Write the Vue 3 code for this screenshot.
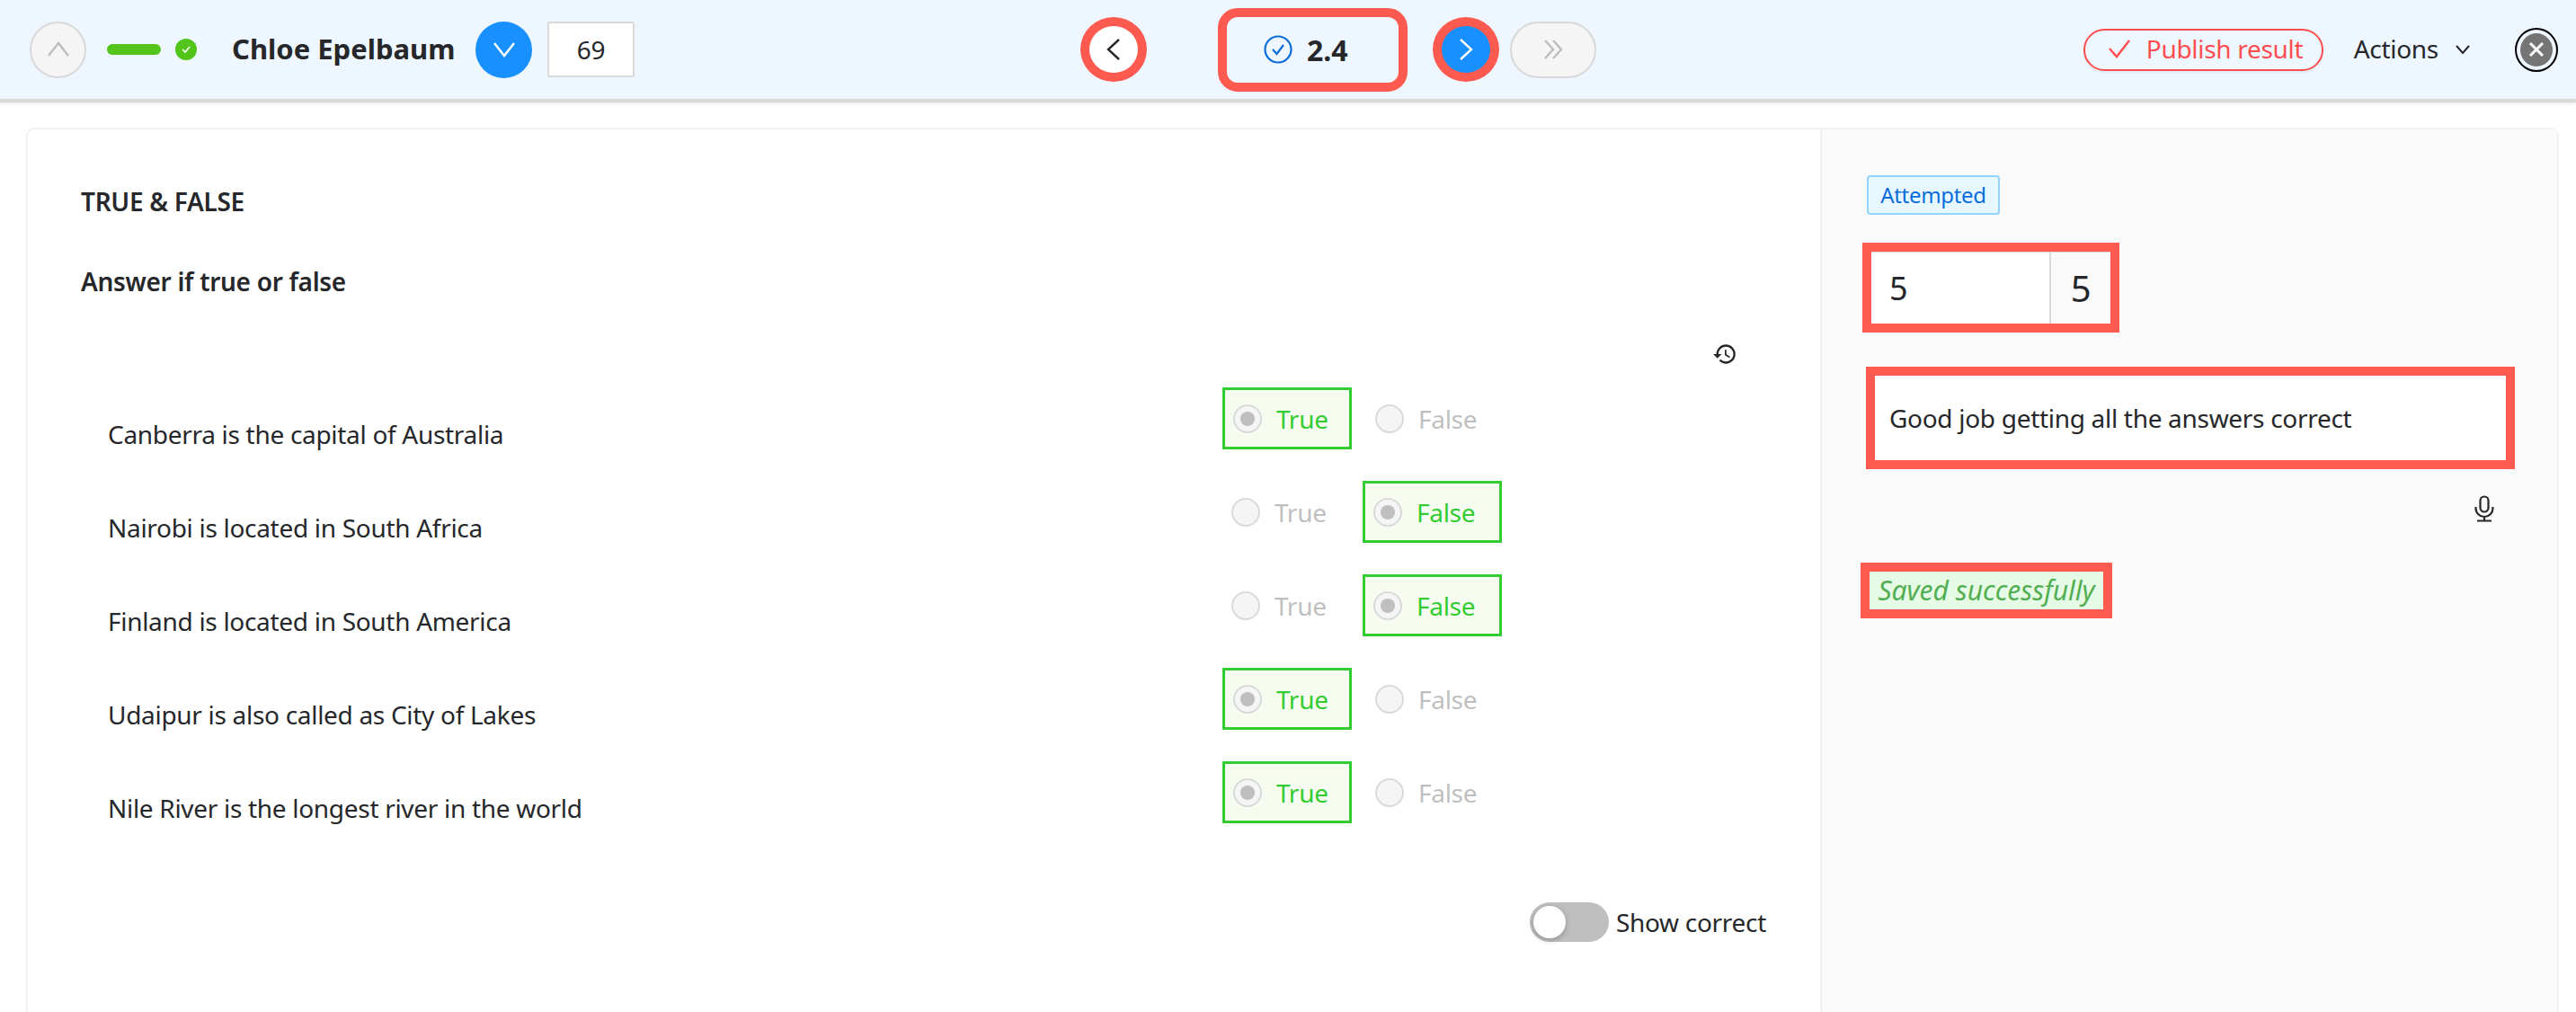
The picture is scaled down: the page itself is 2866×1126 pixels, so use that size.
<template>
  <div class="page">
    <header class="topbar">
      <div class="left">
        <button class="round disabled">
          <svg width="26" height="18" viewBox="0 0 26 18"><path d="M2 16 L13 2 L24 16" /></svg>
        </button>
        <span class="progress"></span>
        <span class="done">
          <svg width="12" height="10" viewBox="0 0 12 10"><path d="M2 5 L5 8 L10 2" /></svg>
        </span>
        <span class="name">Chloe Epelbaum</span>
        <button class="round blue">
          <svg width="26" height="18" viewBox="0 0 26 18"><path d="M2 2 L13 16 L24 2" /></svg>
        </button>
        <div class="count">69</div>
      </div>

      <div class="center">
        <button class="round marked white">
          <svg width="16" height="26" viewBox="0 0 16 26"><path d="M14 2 L2 13 L14 24" /></svg>
        </button>
        <div class="question marked">
          <svg class="q-check" width="32" height="32" viewBox="0 0 32 32">
            <circle cx="16" cy="16" r="14.5" />
            <path d="M10 16 L14.5 21 L22 11" />
          </svg>
          <span>2.4</span>
        </div>
        <button class="round marked blue next">
          <svg width="16" height="26" viewBox="0 0 16 26"><path d="M2 2 L14 13 L2 24" /></svg>
        </button>
        <button class="round disabled last">
          <svg width="22" height="24" viewBox="0 0 22 24"><path d="M2 2 L11 12 L2 22 M11 2 L20 12 L11 22" /></svg>
        </button>
      </div>

      <div class="right">
        <button class="publish">
          <svg width="26" height="22" viewBox="0 0 26 22"><path d="M2 11 L10 20 L24 2" /></svg>
          Publish result
        </button>
        <span class="actions">Actions</span>
        <svg class="caret" width="16" height="10" viewBox="0 0 16 10"><path d="M1 1 L8 9 L15 1" /></svg>
        <div class="close">
          <span class="close-inner">
            <svg width="18" height="18" viewBox="0 0 18 18"><path d="M2 2 L16 16 M16 2 L2 16" /></svg>
          </span>
        </div>
      </div>
    </header>

    <main class="content">
      <section class="card">
        <div class="question-col">
          <h3 class="kind">TRUE &amp; FALSE</h3>
          <p class="prompt">Answer if true or false</p>
          <div class="history">
            <svg width="26" height="24" viewBox="1 2.5 22 19">
              <path d="M13 3a9 9 0 0 0-9 9H1l3.89 3.89.07.14L9 12H6c0-3.87 3.13-7 7-7s7 3.13 7 7-3.13 7-7 7c-1.93 0-3.68-.79-4.94-2.06l-1.42 1.42A8.954 8.954 0 0 0 13 21a9 9 0 0 0 0-18zm-1 5v5l4.28 2.54.72-1.21-3.5-2.08V8H12z" />
            </svg>
          </div>

          <div v-for="row in rows" :key="row.text" class="row">
            <span class="statement">{{ row.text }}</span>
            <div class="options" :class="{ 'false-row': !row.answer }">
              <label class="opt true-opt" :class="{ picked: row.answer }">
                <span class="radio"></span>
                <span>True</span>
              </label>
              <label class="opt false-opt" :class="{ picked: !row.answer }">
                <span class="radio"></span>
                <span>False</span>
              </label>
            </div>
          </div>

          <div class="toggle-line">
            <span class="toggle"><span class="knob"></span></span>
            <span>Show correct</span>
          </div>
        </div>

        <aside class="panel">
          <span class="tag">Attempted</span>
          <div class="score">
            <div class="score-value">5</div>
            <div class="score-max">5</div>
          </div>
          <div class="comment">Good job getting all the answers correct</div>
          <div class="mic">
            <svg width="28" height="30" viewBox="0 0 28 30">
              <rect x="9.5" y="1.5" width="9" height="17" rx="4.5" />
              <path d="M4.5 13 V14.5 A9.5 9.5 0 0 0 23.5 14.5 V13 M14 24 V28 M6 28.5 H22" />
            </svg>
          </div>
          <div class="saved">Saved successfully</div>
        </aside>
      </section>
    </main>
  </div>
</template>

<script setup>
const rows = [
  { text: 'Canberra is the capital of Australia', answer: true },
  { text: 'Nairobi is located in South Africa', answer: false },
  { text: 'Finland is located in South America', answer: false },
  { text: 'Udaipur is also called as City of Lakes', answer: true },
  { text: 'Nile River is the longest river in the world', answer: true }
];
</script>

<style>
html, body {
  margin: 0;
  background: #fff;
}
</style>

<style scoped>
.page {
  height: 100vh;
  overflow: hidden;
  display: flex;
  flex-direction: column;
  font-family: "Noto Sans", "Liberation Sans", sans-serif;
  font-size: 28px;
  letter-spacing: -0.3px;
  color: #25272a;
  box-sizing: border-box;
}

/* top bar */
.topbar {
  flex: none;
  height: 110px;
  box-sizing: content-box;
  background: #eef7ff;
  border-bottom: 4px solid #d9d9d9;
  box-shadow: 0 2px 2px #eeeeee;
  display: flex;
  align-items: center;
  padding-left: 33px;
  padding-right: 20px;
}
.left {
  width: 1169px;
  display: flex;
  align-items: center;
}
.center {
  display: flex;
  align-items: center;
}
.right {
  margin-left: auto;
  display: flex;
  align-items: center;
}

button {
  font-family: inherit;
  letter-spacing: inherit;
  padding: 0;
  cursor: pointer;
}
.round {
  width: 63px;
  height: 63px;
  border-radius: 50%;
  display: flex;
  align-items: center;
  justify-content: center;
  box-sizing: border-box;
  border: 2px solid transparent;
  flex: none;
}
.round svg path {
  fill: none;
  stroke-width: 2.4;
}
.disabled {
  background: #f5f5f5;
  border-color: #d9d9d9;
}
.disabled svg path {
  stroke: #bdbdbd;
}
.blue {
  background: #1890ff;
}
.blue svg path {
  stroke: #fff;
}
.white {
  background: #fff;
}
.white svg path {
  stroke: #25272a;
}
.marked {
  border: 10px solid #fe5a4f;
}
.round.marked {
  width: 74px;
  height: 72px;
}
.progress {
  width: 60px;
  height: 12px;
  border-radius: 6px;
  background: #52c41a;
  margin-left: 23px;
}
.done {
  width: 24px;
  height: 24px;
  border-radius: 50%;
  background: #52c41a;
  margin-left: 16px;
  display: flex;
  align-items: center;
  justify-content: center;
}
.done path {
  fill: none;
  stroke: #fff;
  stroke-width: 1.6;
}
.name {
  font-size: 31px;
  font-weight: 700;
  letter-spacing: 0;
  margin-left: 39px;
  width: 271px;
  padding-bottom: 3px;
  white-space: nowrap;
}
.count {
  width: 97px;
  height: 62px;
  margin-left: 17px;
  box-sizing: border-box;
  background: #fff;
  border: 2px solid #d9d9d9;
  border-radius: 3px;
  display: flex;
  align-items: center;
  justify-content: center;
}
.question {
  width: 211px;
  height: 93px;
  box-sizing: border-box;
  margin-left: 79px;
  border-radius: 22px;
  display: flex;
  align-items: center;
  font-size: 32px;
  font-weight: 700;
  letter-spacing: 0;
  padding-left: 41px;
}
.q-check {
  margin-right: 16px;
}
.q-check circle,
.q-check path {
  fill: none;
  stroke: #096dd9;
  stroke-width: 2.2;
}
.next {
  margin-left: 28px;
}
.last {
  width: 96px;
  margin-left: 12px;
  border-radius: 32px;
}
.publish {
  width: 267px;
  height: 47px;
  box-sizing: border-box;
  background: #eef7ff;
  border: 2px solid #ff4d4f;
  border-radius: 24px;
  color: #ff4d4f;
  font-size: 28px;
  display: flex;
  align-items: center;
  padding: 0 0 3px 25px;
  gap: 17px;
  white-space: nowrap;
  box-shadow: 0 3px 0 #e4eef7;
}
.publish path {
  fill: none;
  stroke: #ff4d4f;
  stroke-width: 2.4;
}
.actions {
  margin-left: 34px;
  padding-bottom: 3px;
}
.caret {
  margin-left: 19px;
}
.caret path {
  fill: none;
  stroke: #25272a;
  stroke-width: 2;
}
.close {
  width: 48px;
  height: 49px;
  box-sizing: border-box;
  margin-left: 50px;
  border: 2px solid #000;
  border-radius: 50%;
  padding: 4px;
}
.close-inner {
  width: 100%;
  height: 100%;
  border-radius: 50%;
  background: #757575;
  display: flex;
  align-items: center;
  justify-content: center;
}
.close-inner path {
  fill: none;
  stroke: #fff;
  stroke-width: 3;
}

/* main card */
.content {
  flex: 1;
  padding: 28px 19px 0 29px;
  min-height: 0;
}
.card {
  height: 1200px;
  box-sizing: border-box;
  border: 2px solid #f0f0f0;
  border-radius: 10px;
  display: flex;
}
.question-col {
  width: 1994px;
  flex: none;
  box-sizing: border-box;
  padding: 60px 60px 0 59px;
}
.kind {
  margin: 0;
  font-size: 28px;
  line-height: 40px;
  font-weight: 600;
}
.prompt {
  margin: 49px 0 0;
  font-size: 28px;
  line-height: 40px;
  font-weight: 600;
}
.history {
  height: 26px;
  margin-top: 49px;
  padding-right: 33px;
  display: flex;
  justify-content: flex-end;
}
.history path {
  fill: #25272a;
}
.row {
  margin-top: 0;
  height: 104px;
  display: flex;
}
.history + .row {
  margin-top: 23px;
}
.statement {
  width: 1270px;
  flex: none;
  padding-left: 30px;
  box-sizing: border-box;
  line-height: 40px;
  padding-top: 32px;
}
.options {
  display: flex;
  gap: 14px;
  align-self: flex-start;
  color: #bfbfbf;
}
.false-row {
  margin-left: -2px;
}
.opt {
  height: 69px;
  box-sizing: border-box;
  border: 3px solid transparent;
  padding-left: 9px;
  display: flex;
  align-items: center;
  gap: 16px;
  flex: none;
}
.true-opt {
  width: 144px;
}
.false-opt {
  width: 155px;
}
.opt.picked {
  border-color: #33cc33;
  background: #f6fcf0;
  color: #33cc33;
}
.radio {
  width: 32px;
  height: 32px;
  box-sizing: border-box;
  border: 2px solid #d9d9d9;
  border-radius: 50%;
  background: #f5f5f5;
  flex: none;
  display: flex;
  align-items: center;
  justify-content: center;
}
.picked .radio::after {
  content: "";
  width: 16px;
  height: 16px;
  border-radius: 50%;
  background: #bfbfbf;
}
.toggle-line {
  margin-top: 53px;
  display: flex;
  justify-content: flex-end;
  align-items: center;
  gap: 8px;
}
.toggle {
  width: 88px;
  height: 44px;
  border-radius: 22px;
  background: #bfbfbf;
  padding: 4px;
  box-sizing: border-box;
  flex: none;
}
.knob {
  display: block;
  width: 36px;
  height: 36px;
  border-radius: 50%;
  background: #fff;
  box-shadow: 0 2px 6px rgba(0, 0, 0, 0.25);
}

/* grading panel */
.panel {
  flex: 1;
  background: #fafafa;
  border-left: 2px solid #f0f0f0;
  padding: 51px 0 0 50px;
  box-sizing: border-box;
}
.tag {
  display: block;
  width: 148px;
  height: 44px;
  box-sizing: border-box;
  background: #e6f7ff;
  border: 2px solid #91d5ff;
  border-radius: 4px;
  color: #096dd9;
  font-size: 24px;
  line-height: 40px;
  text-align: center;
}
.score {
  width: 286px;
  height: 100px;
  margin: 31px 0 0 -5px;
  box-sizing: border-box;
  border: 10px solid #fe5a4f;
  display: flex;
  background: #fff;
  font-size: 36px;
}
.score-value {
  width: 198px;
  border-top: 1px solid #d9d9d9;
  padding-left: 20px;
  line-height: 79px;
  box-sizing: border-box;
}
.score-max {
  flex: 1;
  border-left: 2px solid #d9d9d9;
  border-top: 1px solid #d9d9d9;
  background: #fafafa;
  text-align: center;
  font-size: 40px;
  line-height: 79px;
}
.comment {
  width: 722px;
  height: 114px;
  margin: 38px 0 0 -1px;
  box-sizing: border-box;
  border: 10px solid #fe5a4f;
  background: #fff;
  padding-left: 16px;
  display: flex;
  align-items: center;
}
.mic {
  height: 30px;
  margin-top: 29px;
  padding-right: 67px;
  display: flex;
  justify-content: flex-end;
}
.mic rect,
.mic path {
  fill: none;
  stroke: #25272a;
  stroke-width: 2.2;
}
.saved {
  width: 280px;
  height: 62px;
  box-sizing: border-box;
  margin: 45px 0 0 -7px;
  border: 10px solid #fe5a4f;
  background: #e6fbe6;
  color: #52ae52;
  font-style: italic;
  font-size: 30px;
  letter-spacing: 0;
  padding-bottom: 2px;
  display: flex;
  align-items: center;
  justify-content: center;
  white-space: nowrap;
}
</style>
